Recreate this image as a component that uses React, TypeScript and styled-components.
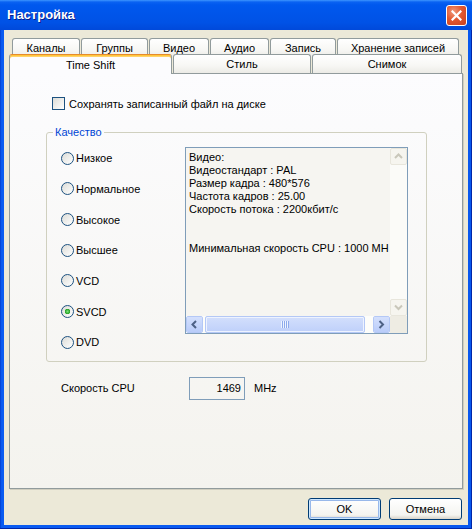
import styled, { createGlobalStyle } from 'styled-components';

const GlobalStyle = createGlobalStyle`
  html, body {
    margin: 0;
    padding: 0;
  }
  body {
    font-family: 'Liberation Sans', Tahoma, Arial, sans-serif;
    font-size: 11px;
    color: #000;
  }
`;

const backTabs = [
  { label: 'Каналы', width: 68 },
  { label: 'Группы', width: 67 },
  { label: 'Видео', width: 60 },
  { label: 'Аудио', width: 59 },
  { label: 'Запись', width: 66 },
  { label: 'Хранение записей', width: 122 },
];

const frontTabs = [
  { label: 'Time Shift', width: 163, active: true },
  { label: 'Стиль', width: 138 },
  { label: 'Снимок', width: 150 },
];

const qualities = ['Низкое', 'Нормальное', 'Высокое', 'Высшее', 'VCD', 'SVCD', 'DVD'];

// the last line runs under the scrollbar in the original, only "MH" is visible
const infoLines = [
  'Видео:',
  'Видеостандарт : PAL',
  'Размер кадра : 480*576',
  'Частота кадров : 25.00',
  'Скорость потока : 2200кбит/с',
  '',
  '',
  'Минимальная скорость CPU : 1000 MH',
];

const Chevron = ({ dir, color }: { dir: 'up' | 'down' | 'left' | 'right'; color: string }) => {
  const pts = {
    up: '1,6 4.5,2.5 8,6',
    down: '1,2.5 4.5,6 8,2.5',
    left: '6,1 2.5,4.5 6,8',
    right: '2.5,1 6,4.5 2.5,8',
  }[dir];
  return (
    <svg width="9" height="9" viewBox="0 0 9 9">
      <polyline points={pts} fill="none" stroke={color} strokeWidth="2" />
    </svg>
  );
};

export default function App() {
  return (
    <>
      <GlobalStyle />
      <Window>
        <TitleBar>
          <Title>Настройка</Title>
          <CloseButton>
            <svg width="11" height="11" viewBox="0 0 11 11">
              <path d="M1.5 1.5 L9.5 9.5 M9.5 1.5 L1.5 9.5" stroke="#fff" strokeWidth="2.2" strokeLinecap="square" />
            </svg>
          </CloseButton>
        </TitleBar>
        <Client>
          <TabRow $back>
            {backTabs.map(t => (
              <Tab key={t.label} $w={t.width}>{t.label}</Tab>
            ))}
          </TabRow>
          <TabRow>
            {frontTabs.map(t => (
              <Tab key={t.label} $w={t.width} $active={t.active}>
                {t.label}
              </Tab>
            ))}
          </TabRow>
          <Panel>
            <CheckRow>
              <CheckBox />
              <span>Сохранять записанный файл на диске</span>
            </CheckRow>
            <Group>
              <Legend>Качество</Legend>
              <GroupBody>
                <RadioList>
                  {qualities.map(q => (
                    <RadioRow key={q}>
                      <Radio $on={q === 'SVCD'} />
                      <span>{q}</span>
                    </RadioRow>
                  ))}
                </RadioList>
                <InfoBox>
                  <InfoText>
                    {infoLines.map((l, i) => (
                      <div key={i}>{l || '\u00a0'}</div>
                    ))}
                  </InfoText>
                  <VScroll>
                    <DisabledBtn><Chevron dir="up" color="#C9C7BA" /></DisabledBtn>
                    <DisabledBtn><Chevron dir="down" color="#C9C7BA" /></DisabledBtn>
                  </VScroll>
                  <HScroll>
                    <ScrollBtn><Chevron dir="left" color="#4D6185" /></ScrollBtn>
                    <Thumb>
                      <Grip />
                    </Thumb>
                    <ScrollBtn><Chevron dir="right" color="#4D6185" /></ScrollBtn>
                  </HScroll>
                  <Corner />
                </InfoBox>
              </GroupBody>
            </Group>
            <CpuRow>
              <CpuLabel>Скорость CPU</CpuLabel>
              <CpuInput>1469</CpuInput>
              <span>MHz</span>
            </CpuRow>
          </Panel>
          <Footer>
            <Button $default>OK</Button>
            <Button>Отмена</Button>
          </Footer>
        </Client>
      </Window>
    </>
  );
}

const Window = styled.div`
  width: 472px;
  height: 529px;
  display: flex;
  flex-direction: column;
  background: linear-gradient(90deg, #0033C4 0, #0858EE 1px, #0A5CF2 3px, #0858EE 100%);
  box-shadow: inset -1px -1px 0 #0026A8;
`;

const TitleBar = styled.div`
  height: 30px;
  flex: none;
  display: flex;
  align-items: center;
  justify-content: space-between;
  padding: 0 5px 0 7px;
  box-sizing: border-box;
  background: linear-gradient(#3D95FF 0, #0A62F2 2px, #0058EE 5px, #0055EA 45%, #0052E6 75%, #0049DA 100%);
`;

const Title = styled.div`
  color: #fff;
  font-size: 13px;
  font-weight: bold;
  text-shadow: 1px 1px 0 #0A1E8C;
  padding-bottom: 1px;
`;

const CloseButton = styled.div`
  width: 21px;
  height: 21px;
  box-sizing: border-box;
  border: 1px solid #fff;
  border-radius: 3px;
  background: radial-gradient(circle at 35% 30%, #F09A7C 0, #E2582F 45%, #C8401F 100%);
  display: flex;
  align-items: center;
  justify-content: center;
  margin-top: 1px;
`;

const Client = styled.div`
  flex: 1;
  display: flex;
  flex-direction: column;
  margin: 0 4px 4px;
  padding: 8px 5px 0;
  background: #ECE9D8;
`;

const TabRow = styled.div<{ $back?: boolean }>`
  display: flex;
  gap: 1px;
  height: ${p => (p.$back ? 19 : 16)}px;
  padding-left: ${p => (p.$back ? 3 : 0)}px;
  align-items: ${p => (p.$back ? 'flex-start' : 'flex-end')};
`;

const Tab = styled.div<{ $w: number; $active?: boolean }>`
  position: relative;
  z-index: ${p => (p.$active ? 2 : 0)};
  width: ${p => p.$w}px;
  height: ${p => (p.$active ? 20 : 19)}px;
  margin-bottom: ${p => (p.$active ? -1 : 0)}px;
  flex: none;
  box-sizing: border-box;
  border: 1px solid #919B9C;
  border-bottom: none;
  border-radius: 3px 3px 0 0;
  display: flex;
  align-items: center;
  justify-content: center;
  padding-bottom: ${p => (p.$active ? 0 : 1)}px;
  background: ${p =>
    p.$active
      ? '#FCFCFE'
      : 'linear-gradient(#FFFFFF, #F7F7F4 60%, #ECEBE6)'};
  ${p =>
    p.$active &&
    `border-top: 1px solid #E68B2C;
     box-shadow: inset 0 1px 0 #FFC73C, inset 0 2px 0 #FFD26A;`}
  ${TabRow}:last-of-type > & {
    height: ${p => (p.$active ? 20 : 16)}px;
  }
`;

const Panel = styled.div`
  position: relative;
  flex: 1;
  display: flex;
  flex-direction: column;
  border: 1px solid #919B9C;
  box-shadow: 1px 1px 0 #D0CEBF;
  background: linear-gradient(#FCFCFE, #F4F3EE);
  padding-left: 36px;
`;

const CheckRow = styled.div`
  display: flex;
  align-items: center;
  gap: 4px;
  margin: 23px 0 0 6px;
  height: 13px;
`;

const CheckBox = styled.div`
  width: 13px;
  height: 13px;
  box-sizing: border-box;
  border: 1px solid #1C5180;
  background: linear-gradient(135deg, #DCDCD7, #FFFFFF);
`;

const Group = styled.fieldset`
  margin: 16px 0 0 0;
  padding: 4px 0 3px 14px;
  width: 381px;
  box-sizing: border-box;
  border: 1px solid #D0D0BF;
  border-radius: 3px;
  min-inline-size: 0;
`;

const Legend = styled.legend`
  color: #0046D5;
  padding: 0 2px;
  margin-left: -8px;
  line-height: 13px;
`;

const GroupBody = styled.div`
  display: flex;
  align-items: flex-start;
`;

const RadioList = styled.div`
  width: 124px;
  display: grid;
  grid-auto-rows: 30.67px;
`;

const RadioRow = styled.div`
  display: flex;
  align-items: center;
  gap: 2px;
`;

const Radio = styled.div<{ $on?: boolean }>`
  width: 13px;
  height: 13px;
  box-sizing: border-box;
  border-radius: 50%;
  border: 1px solid #1C5180;
  background: ${p =>
    p.$on
      ? 'radial-gradient(circle, #7BE07B 0, #21A121 2.5px, transparent 3px), linear-gradient(135deg, #DCDCD7, #FFFFFF)'
      : 'linear-gradient(135deg, #DCDCD7, #FFFFFF)'};
`;

const InfoBox = styled.div`
  margin-top: 3.5px;
  width: 223px;
  height: 187px;
  box-sizing: border-box;
  border: 1px solid #7F9DB9;
  background: #F6F5F1;
  display: grid;
  grid-template-columns: 1fr 17px;
  grid-template-rows: 1fr 17px;
`;

const InfoText = styled.div`
  padding: 3px 0 0 3px;
  line-height: 13px;
  white-space: pre;
  overflow: hidden;
`;

const VScroll = styled.div`
  display: flex;
  flex-direction: column;
  justify-content: space-between;
  background: #FBFBF8;
`;

const DisabledBtn = styled.div`
  height: 17px;
  box-sizing: border-box;
  border: 1px solid #E8E6DC;
  border-radius: 2px;
  background: #F6F5EF;
  display: flex;
  align-items: center;
  justify-content: center;
`;

const HScroll = styled.div`
  display: flex;
  align-items: stretch;
  background: #FDFDFA;
  gap: 2px;
`;

const ScrollBtn = styled.div`
  width: 17px;
  flex: none;
  box-sizing: border-box;
  border: 1px solid #FFFFFF;
  outline: 1px solid #B4C8F6;
  outline-offset: -1px;
  border-radius: 2px;
  background: linear-gradient(#D4E0FD, #B9CCF9);
  display: flex;
  align-items: center;
  justify-content: center;
`;

const Thumb = styled.div`
  width: 160px;
  margin-right: auto;
  box-sizing: border-box;
  border: 1px solid #B4C8F6;
  border-radius: 2px;
  background: linear-gradient(#D3DFFC, #BFD0FA);
  box-shadow: inset 0 0 0 1px #EEF3FF;
  display: flex;
  align-items: center;
  justify-content: center;
`;

const Grip = styled.div`
  width: 8px;
  height: 7px;
  background: repeating-linear-gradient(90deg, #EEF4FE 0 1px, #8CAAEC 1px 2px);
`;

const Corner = styled.div`
  background: #EEECE3;
`;

const CpuRow = styled.div`
  display: flex;
  align-items: center;
  margin: 15px 0 0 15px;
`;

const CpuLabel = styled.span`
  width: 128px;
`;

const CpuInput = styled.div`
  width: 56px;
  height: 23px;
  box-sizing: border-box;
  border: 1px solid #7F9DB9;
  text-align: right;
  padding: 4px 3px 0 0;
  margin-right: 9px;
`;

const Footer = styled.div`
  display: flex;
  justify-content: flex-end;
  gap: 8px;
  padding: 9px 1px 5px 0;
`;

const Button = styled.div<{ $default?: boolean }>`
  width: 73px;
  height: 22px;
  box-sizing: border-box;
  border: 1px solid #003C74;
  border-radius: 3px;
  background: linear-gradient(#FFFFFF, #F4F4F0 80%, #D8D3C8);
  display: flex;
  align-items: center;
  justify-content: center;
  ${p => p.$default && 'box-shadow: inset 0 0 0 1px #CEE7FF, inset 0 0 0 2px #98B8EA;'}
`;
